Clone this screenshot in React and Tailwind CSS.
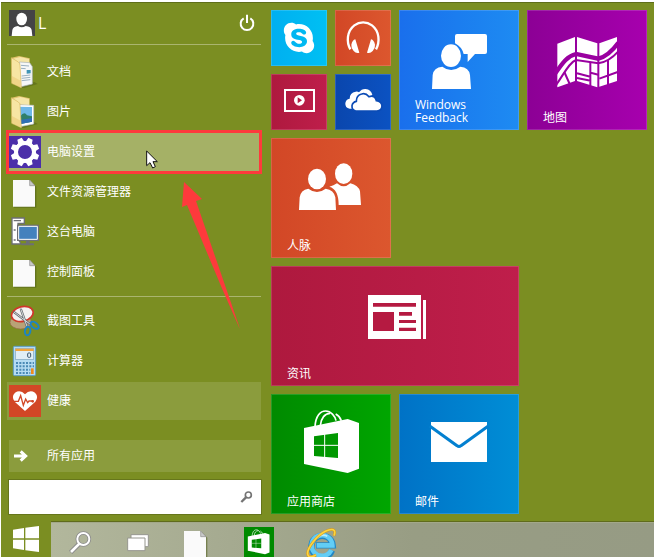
import { FaSkype } from "react-icons/fa";

const PersonIcon = () => (
  <svg viewBox="0 0 78 78" className="size-[26px] bg-[#444446]" aria-hidden="true">
    <path fill="#fff" d="M8 78 L10 60 Q12 50 27 48 Q38 56 50 48 Q66 50 68 60 L70 78Z" />
    <ellipse cx="38" cy="27" rx="16" ry="19" fill="#fff" />
  </svg>
);

const PowerIcon = () => (
  <svg viewBox="0 0 48 54" className="h-[18px] w-4" fill="none" stroke="#fff" strokeWidth="6" aria-hidden="true">
    <path d="M14 13 A19 19 0 1 0 34 13" />
    <path d="M24 2 V27" />
  </svg>
);

const FolderShell = ({ children }) => (
  <svg viewBox="0 0 96 96" className="size-8" aria-hidden="true">
    <path d="M36 92 L76 78 L86 84 L42 97Z" fill="#4f5d16" opacity=".5" />
    <path d="M8 5 L30 0 L62 7 V70 L30 88Z" fill="#e3c56f" />
    <path d="M12 8 L34 3 L60 9 V30 L26 22Z" fill="#f6e6a8" />
    {children}
    <path d="M7 5 L28 18 Q33 21 33 27 L37 95 L8 82Z" fill="#f7e5a3" stroke="#d9b861" strokeWidth="2" />
    <path d="M9 60 L35 74 V94 L9 81Z" fill="#edcf7c" opacity=".7" />
  </svg>
);

const DocumentsIcon = () => (
  <FolderShell>
    <path d="M31 18 L62 20 L70 32 V84 L32 93Z" fill="#f6f7f8" stroke="#a9b2b8" strokeWidth="2" />
    <path d="M36 28 L60 30 M36 37 L50 38 M38 60 L64 57 M38 67 L64 64 M38 74 L64 71" stroke="#9ab0c0" strokeWidth="3" />
    <path d="M53 42 L65 42 V52 L53 53Z" fill="#3f93b5" />
  </FolderShell>
);

const PicturesIcon = () => (
  <FolderShell>
    <path d="M28 26 L74 28 V84 L32 92Z" fill="#fff" stroke="#b7bfc4" strokeWidth="2" />
    <path d="M30 32 L69 33 V77 L34 84Z" fill="#6db7e8" />
    <path d="M34 61 Q46 44 54 58 L69 61 V77 L34 84Z" fill="#2f7f6a" />
    <path d="M34 72 L69 66 V77 L34 84Z" fill="#2f6fb5" />
  </FolderShell>
);

const GearIcon = () => (
  <svg viewBox="0 0 96 96" className="size-8 bg-[#4b2fa9]" aria-hidden="true">
    <g fill="#fff">
      {[22.5, 67.5, 112.5, 157.5, 202.5, 247.5, 292.5, 337.5].map((angle) => (
        <path key={angle} d="M38 20 L41 5 H55 L58 20Z" transform={`rotate(${angle} 48 48)`} />
      ))}
    </g>
    <circle cx="48" cy="48" r="27" fill="none" stroke="#fff" strokeWidth="12" />
  </svg>
);

const PageIcon = () => (
  <svg viewBox="0 0 96 96" className="size-8" aria-hidden="true">
    <path d="M15 15 H66 L82 32 V95 H15Z" fill="#4f5c1a" opacity=".55" />
    <path d="M12 12 H62 L78 29 V92 H12Z" fill="#fafafa" />
    <path d="M62 12 L78 29 H62Z" fill="#c9c9c9" stroke="#8d8d8d" strokeWidth="2" />
  </svg>
);

const ComputerIcon = () => (
  <svg viewBox="0 0 96 96" className="size-8" aria-hidden="true">
    <path d="M9 6 H46 V22 H27 V68 L36 84 H9Z" fill="#fff" stroke="#6d6f74" strokeWidth="4" />
    <path d="M14 14 H36 M14 42 H20 M14 72 H20" stroke="#6d6f74" strokeWidth="4" />
    <path d="M24 26 H90 V75 H24Z" fill="#6d6f74" />
    <path d="M29 31 H85 V70 H29Z" fill="#4481bd" stroke="#fff" strokeWidth="3" />
    <path d="M51 75 H62 V82 H75 V88 H38 V82 H51Z" fill="#6d6f74" />
  </svg>
);

const SnippingIcon = () => (
  <svg viewBox="0 0 96 96" className="size-8" aria-hidden="true">
    <ellipse cx="35" cy="52" rx="32" ry="20" fill="#b9a277" stroke="#9a6a4b" strokeWidth="2" />
    <ellipse cx="40" cy="27" rx="33" ry="22" fill="#f4f2f2" stroke="#d0362b" strokeWidth="5" transform="rotate(-14 40 27)" />
    <path d="M16 22 L64 58 M36 14 L54 64" stroke="#62686d" strokeWidth="7" strokeLinecap="round" />
    <path d="M16 22 L64 58 M36 14 L54 64" stroke="#d5d9dc" strokeWidth="3" strokeLinecap="round" />
    <ellipse cx="77" cy="61" rx="14" ry="8" fill="none" stroke="#1d84c4" strokeWidth="6" transform="rotate(38 77 61)" />
    <ellipse cx="56" cy="78" rx="8" ry="13" fill="none" stroke="#1d84c4" strokeWidth="6" transform="rotate(10 56 78)" />
  </svg>
);

const CalculatorIcon = () => (
  <svg viewBox="0 0 96 96" className="size-8" aria-hidden="true">
    <rect x="13" y="4" width="67" height="88" rx="4" fill="#b5dcf2" stroke="#5b9cc6" strokeWidth="3" />
    <rect x="19" y="11" width="55" height="32" fill="#e1eef5" stroke="#7fa4bc" strokeWidth="2" />
    <rect x="19" y="11" width="55" height="7" fill="#f3a53c" />
    <rect x="56" y="24" width="9" height="13" rx="3" fill="none" stroke="#37536b" strokeWidth="3" />
    <path d="M21 54 H75 M21 64 H75 M21 74 H64 M21 84 H64" stroke="#4a8ab5" strokeWidth="6" strokeDasharray="6 4" />
    <rect x="66" y="70" width="8" height="17" fill="#f08c1c" />
  </svg>
);

const HealthIcon = () => (
  <svg viewBox="0 0 96 96" className="size-8 bg-[#d24726]" aria-hidden="true">
    <path fill="#fff" d="M48 78 L17 50 Q6 35 18 23 Q34 12 48 28 Q62 12 78 23 Q90 35 79 50Z" />
    <path d="M14 49 H28 L35 32 L43 61 L50 42 L56 53 L60 48 H72" fill="none" stroke="#d24726" strokeWidth="4" />
    <circle cx="71" cy="49" r="4" fill="#d24726" />
  </svg>
);

const ArrowIcon = () => (
  <svg viewBox="0 0 42 36" className="h-3 w-[14px]" aria-hidden="true">
    <path d="M0 18 H34 M20 4 L35 18 L20 32" fill="none" stroke="#fff" strokeWidth="9" />
  </svg>
);

const BagShape = () => (
  <>
    <path d="M132 98 C134 66 148 51 164 51 C180 51 192 66 195 80" fill="none" stroke="#fff" strokeWidth="5" />
    <path d="M148 95 C150 72 162 58 177 58 M194 60 Q206 66 211 80" fill="none" stroke="#fff" strokeWidth="5" />
    <path fillRule="evenodd" fill="#fff" d="M99 102 L230 75 L264 87 V224 L230 237 L99 210Z M129 127 V186 L201 192 V117Z" />
    <path d="M161 118 V194 M129 154 H201" stroke="#fff" strokeWidth="3" />
  </>
);

const FeedbackArt = () => (
  <g fill="#fff">
    <path d="M99 237 L101 195 Q104 172 130 170 Q156 190 184 170 Q210 172 213 195 L216 237Z" />
    <ellipse cx="156" cy="137" rx="30" ry="34" />
    <path d="M174 72 H258 Q264 72 264 78 V126 Q264 132 258 132 H228 L206 156 V132 H194 Q188 110 168 100 V78 Q168 72 174 72Z" />
  </g>
);

const MapArt = () => (
  <>
    <g fill="#fff">
      <path d="M91 101 L144 81 V213 L91 232Z" />
      <path d="M150 81 L211 100 V232 L150 213Z" />
      <path d="M217 100 L270 81 V213 L217 230Z" />
    </g>
    <g fill="none" stroke="#9a00a0">
      <path d="M85 190 C108 156 122 138 147 132 L214 146 C236 140 255 124 274 98" strokeWidth="13" />
      <path d="M88 224 C112 190 126 158 147 150 L214 160 C240 156 258 142 274 124" strokeWidth="6" />
      <path d="M112 186 L128 222 M150 204 L191 212 M190 156 V230 M150 190 L190 200 M191 188 L214 194 M217 206 L272 186 M243 150 V226" strokeWidth="6" />
    </g>
  </>
);

const PeopleArt = () => (
  <g fill="#fff">
    <ellipse cx="138" cy="123" rx="27" ry="31" />
    <path d="M84 216 L86 178 Q89 156 112 152 Q138 172 164 152 Q189 156 193 178 L195 216Z" />
    <ellipse cx="218" cy="107" rx="26" ry="31" />
    <path d="M175 146 Q188 143 198 136 Q218 154 238 136 Q262 142 267 160 L270 201 H203 Q203 154 175 146Z" />
  </g>
);

const NewsArt = () => (
  <>
    <path fill="#fff" d="M291 87 H450 V219 H291Z M456 102 H465 V219 H456Z" />
    <path fill="#b51a41" d="M306 111 H435 V122 H306Z M306 138 H369 V195 H306Z M384 138 H423 V149 H384Z M384 162 H435 V171 H384Z M384 185 H435 V195 H384Z" />
  </>
);

const MailArt = () => (
  <>
    <path fill="#fff" d="M96 84 H264 V204 H96Z" />
    <path d="M92 96 L174 155 Q180 160 186 155 L268 96" fill="none" stroke="#0380d0" strokeWidth="9" />
  </>
);

const HeadphonesArt = () => (
  <>
    <path d="M46 118 C34 96 35 64 58 46 C74 34 95 34 111 46 C134 64 135 96 123 118" fill="none" stroke="#fff" strokeWidth="7" />
    <path fill="#fff" d="M49 104 Q52 90 61 88 L73 128 Q64 132 56 123 Q48 115 49 104Z" />
    <path fill="#fff" d="M120 104 Q117 90 108 88 L96 128 Q105 132 113 123 Q121 115 120 104Z" />
  </>
);

const VideoArt = () => (
  <>
    <rect x="42" y="48" width="87" height="63" fill="none" stroke="#fff" strokeWidth="6" />
    <circle cx="85" cy="79" r="16" fill="#fff" />
    <path d="M80 70 L93 79 L80 88Z" fill="#b51a41" />
  </>
);

const CloudArt = () => (
  <>
    <path fill="#fff" d="M44 104 Q30 102 31 88 Q32 76 44 74 Q44 56 62 53 Q68 52 72 55 Q80 44 92 45 Q108 47 112 62 L80 104Z" />
    <path
      fill="#fff"
      stroke="#0b4bb5"
      strokeWidth="5"
      d="M62 111 Q50 108 51 95 Q53 84 64 82 Q64 64 80 60 Q92 56 102 68 Q120 62 124 80 Q140 82 141 96 Q140 110 126 111Z"
    />
  </>
);

const Tile = ({ label, color, size, viewBox = "0 0 360 360", children }) => (
  <button type="button" aria-label={label} className={`grid inset-ring inset-ring-white/15 bg-linear-to-r text-left ${color} ${size}`}>
    <svg viewBox={viewBox} className="col-start-1 row-start-1 size-full" aria-hidden="true">
      {children}
    </svg>
    <span className="col-start-1 row-start-1 self-end px-4 pb-1.5 leading-[13px]">{label}</span>
  </button>
);

const SmallTile = ({ name, color, children }) => (
  <button type="button" aria-label={name} className={`inset-ring inset-ring-white/15 bg-linear-to-r ${color}`}>
    <svg viewBox="0 0 168 168" className="size-full" aria-hidden="true">
      {children}
    </svg>
  </button>
);

const Cursor = () => (
  <svg viewBox="0 0 36 57" className="absolute top-[18px] left-[139px] h-[19px] w-3" aria-hidden="true">
    <path d="M2 3 V47 L12 38 L20 54 L28 50 L21 35 H34Z" fill="#fff" stroke="#111" strokeWidth="3" />
  </svg>
);

const MenuItem = ({ label, icon: Icon, state }) => (
  <li className="relative py-px">
    <button
      type="button"
      className={`flex h-[38px] w-full items-center gap-1.5 pl-0.5 ${
        state === "active" ? "bg-[#a5b166]" : state === "new" ? "bg-[#8b9c3d]" : ""
      }`}
    >
      <Icon />
      <span>{label}</span>
    </button>
    {state === "active" && (
      <>
        <span className="pointer-events-none absolute -inset-x-px -inset-y-0.5 border-3 border-[#fd3a3c]" />
        <Cursor />
      </>
    )}
  </li>
);

const places = [
  { label: "文档", icon: DocumentsIcon },
  { label: "图片", icon: PicturesIcon },
  { label: "电脑设置", icon: GearIcon, state: "active" },
  { label: "文件资源管理器", icon: PageIcon },
  { label: "这台电脑", icon: ComputerIcon },
  { label: "控制面板", icon: PageIcon },
];

const recent = [
  { label: "截图工具", icon: SnippingIcon },
  { label: "计算器", icon: CalculatorIcon },
  { label: "健康", icon: HealthIcon, state: "new" },
];

const StartPanel = () => (
  <div className="flex w-[254px] shrink-0 flex-col">
    <div className="flex h-[26px] items-center gap-[3px] pr-1.5 pl-0.5">
      <PersonIcon />
      <span className="flex-1 text-base">L</span>
      <button type="button" aria-label="电源">
        <PowerIcon />
      </button>
    </div>
    <hr className="mt-2 border-[#aab56f]" />
    <ul className="mt-[7px]">
      {places.map((item) => (
        <MenuItem key={item.label} {...item} />
      ))}
    </ul>
    <hr className="mt-1 border-[#aab56f]" />
    <ul className="mt-1">
      {recent.map((item) => (
        <MenuItem key={item.label} {...item} />
      ))}
    </ul>
    <button type="button" className="mt-[19px] ml-0.5 flex h-8 items-center bg-[#8b9c3d] pl-[5px]">
      <ArrowIcon />
      <span className="ml-[19px]">所有应用</span>
    </button>
    <label className="mt-2 ml-0.5 flex h-[34px] items-center bg-white pr-2 ring ring-[#66761b]">
      <input type="search" aria-label="搜索" className="min-w-0 flex-1 self-stretch px-2 text-black outline-none" />
      <svg viewBox="0 0 39 39" className="size-[13px]" fill="none" stroke="#747474" aria-hidden="true">
        <circle cx="25" cy="12" r="9" strokeWidth="5" />
        <path d="M18 19 L4 33" strokeWidth="7" />
      </svg>
    </label>
  </div>
);

const Tiles = () => (
  <div className="grid auto-rows-[56px] grid-cols-[repeat(6,56px)] content-start gap-2">
    <SmallTile name="Skype" color="from-[#00aff0] to-[#00c0f3]">
      <FaSkype x="32" y="32" size="104" color="#fff" />
    </SmallTile>
    <SmallTile name="音乐" color="from-[#d24726] to-[#dc572e]">
      <HeadphonesArt />
    </SmallTile>
    <Tile label="Windows Feedback" color="from-[#1a6fec] to-[#1e8bf2]" size="col-span-2 row-span-2">
      <FeedbackArt />
    </Tile>
    <Tile label="地图" color="from-[#8c0095] to-[#a700ae]" size="col-span-2 row-span-2">
      <MapArt />
    </Tile>
    <SmallTile name="视频" color="from-[#ae193e] to-[#bf1e4b]">
      <VideoArt />
    </SmallTile>
    <SmallTile name="OneDrive" color="from-[#0a46ad] to-[#0b52c2]">
      <CloudArt />
    </SmallTile>
    <Tile label="人脉" color="from-[#d24726] to-[#dc572e]" size="col-span-2 row-span-2 col-start-1">
      <PeopleArt />
    </Tile>
    <Tile label="资讯" color="from-[#ae193e] to-[#bf1e4b]" size="col-span-4 row-span-2 col-start-1" viewBox="0 0 744 360">
      <NewsArt />
    </Tile>
    <Tile label="应用商店" color="from-[#008a00] to-[#00a600]" size="col-span-2 row-span-2 col-start-1">
      <BagShape />
    </Tile>
    <Tile label="邮件" color="from-[#0072c6] to-[#008ed6]" size="col-span-2 row-span-2">
      <MailArt />
    </Tile>
  </div>
);

const TaskButton = ({ name, width = "w-[58px]", children }) => (
  <button type="button" aria-label={name} className={`flex justify-center pt-[5px] ${width}`}>
    {children}
  </button>
);

const Taskbar = () => (
  <div className="flex h-9 overflow-hidden bg-[#7b8e22]">
    <button type="button" aria-label="开始" className="w-[50px] pl-3">
      <svg viewBox="0 0 78 78" className="size-[26px]" fill="#fff" aria-hidden="true">
        <path d="M0 11 L33 6 V37 H0Z M37 5 L78 0 V37 H37Z M0 41 H33 V72 L0 67Z M37 41 H78 V78 L37 73Z" />
      </svg>
    </button>
    <div className="flex flex-1 border-t border-[#5f6b1c] bg-linear-to-r from-[#b2b79c] via-[#989d84] via-60% to-[#969b84] inset-shadow-[0_1px_0_#a3a88a]">
      <TaskButton name="搜索">
        <svg viewBox="0 0 72 78" className="mt-1 h-[26px] w-6" fill="none" aria-hidden="true">
          <path d="M33 39 L8 64" stroke="#8c8c8c" strokeWidth="14" />
          <circle cx="46" cy="24" r="18" stroke="#8c8c8c" strokeWidth="11" />
          <path d="M35 37 L9 63" stroke="#fff" strokeWidth="8" />
          <circle cx="46" cy="24" r="18" stroke="#fff" strokeWidth="6" />
        </svg>
      </TaskButton>
      <TaskButton name="任务视图">
        <svg viewBox="0 0 66 54" className="mt-[7px] h-[18px] w-[22px]" fill="#fff" stroke="#96968f" strokeWidth="3" aria-hidden="true">
          <path d="M12 2 H64 V38 H12Z" />
          <path d="M2 12 H54 V50 H2Z" />
        </svg>
      </TaskButton>
      <TaskButton name="文件">
        <PageIcon />
      </TaskButton>
      <TaskButton name="应用商店" width="w-[68px]">
        <svg viewBox="70 30 228 228" className="size-[30px] bg-[#008a00]" aria-hidden="true">
          <BagShape />
        </svg>
      </TaskButton>
      <TaskButton name="Internet Explorer">
        <svg viewBox="0 0 96 96" className="size-8" fill="none" aria-hidden="true">
          <path d="M78 70 A32 32 0 1 1 80 55 H30" stroke="#2387c5" strokeWidth="19" />
          <path d="M76 69 A31 31 0 1 1 79 55 H32" stroke="#62cdf5" strokeWidth="14" />
          <path d="M24 44 A28 28 0 0 1 64 28" stroke="#b4ecff" strokeWidth="5" />
          <path d="M84 26 C92 6 78 3 58 13 C30 27 2 66 5 82 C8 94 20 90 30 84" stroke="#d99a12" strokeWidth="8" />
          <path d="M84 26 C92 6 78 3 58 13 C30 27 2 66 5 82 C8 94 20 90 30 84" stroke="#fcd441" strokeWidth="5" />
        </svg>
      </TaskButton>
    </div>
  </div>
);

const PointerArrow = () => (
  <svg viewBox="0 0 180 450" className="pointer-events-none absolute top-[177px] left-[180px] h-[150px] w-[60px]" aria-hidden="true">
    <path d="M9 6 L63 57 L45 63 L137 330 L177 447 L174 441 L125 330 L18 75 L3 81Z" fill="#fd3a3c" />
  </svg>
);

export default function App() {
  return (
    <div className="min-h-screen bg-white pt-0.5 pl-px font-['Open_Sans','Noto_Sans_CJK_SC',sans-serif] text-xs text-white">
      <main className="relative flex gap-2.5 border-t border-[#5f6e19] bg-[#7b8e22] pt-[7px] pb-[7px] pl-1.5">
        <StartPanel />
        <Tiles />
        <PointerArrow />
      </main>
      <Taskbar />
    </div>
  );
}
